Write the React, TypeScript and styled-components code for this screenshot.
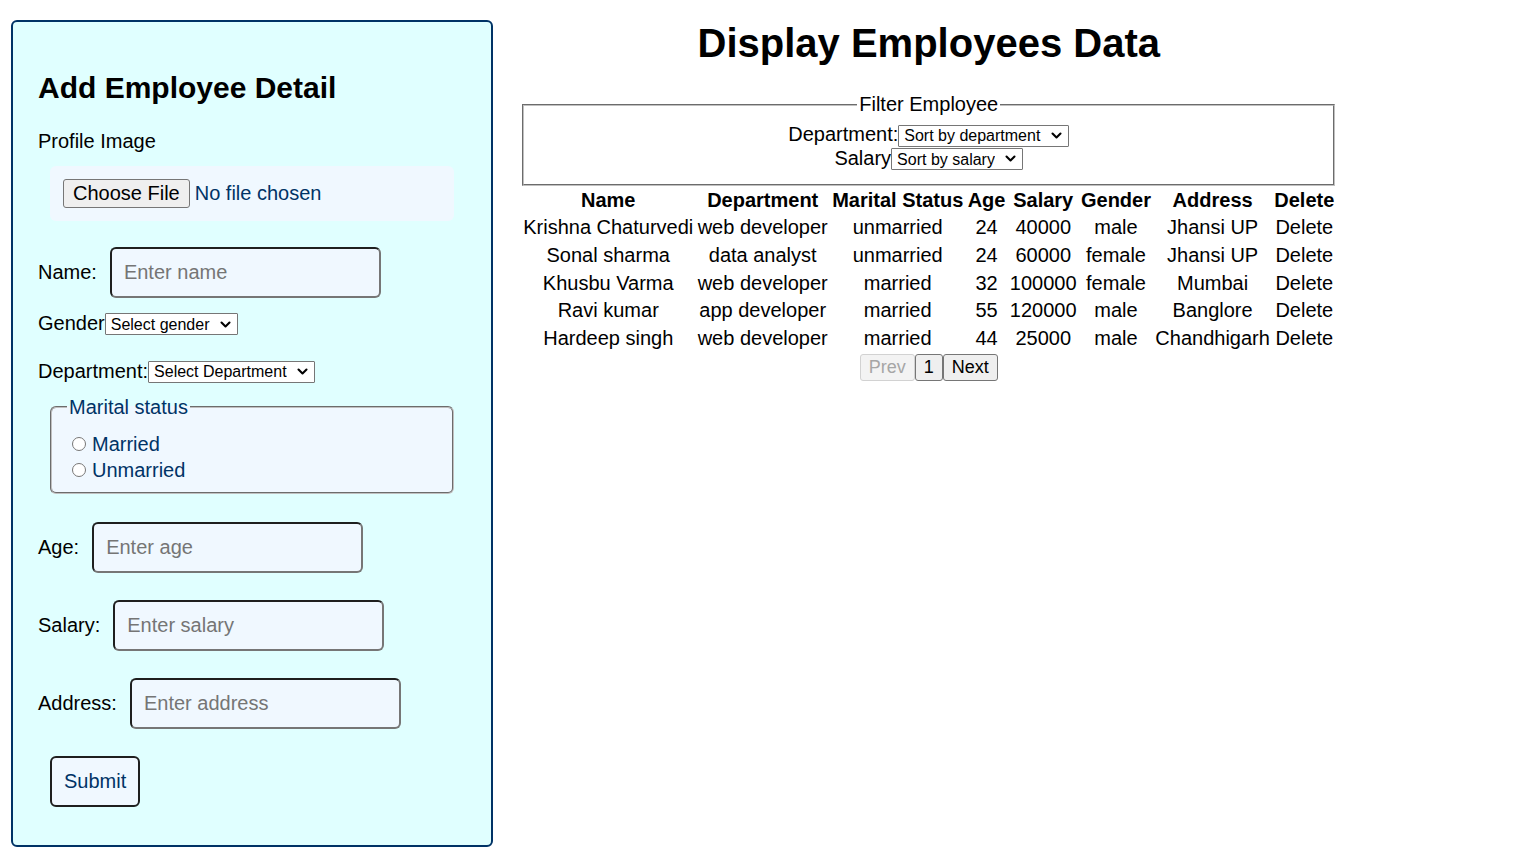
import React from "react";
import styled, { createGlobalStyle } from "styled-components";

const GlobalStyle = createGlobalStyle`
  body {
    margin: 0;
    background: #fff;
    color: #000;
    font-family: "Liberation Sans", Arial, sans-serif;
  }
`;

const Page = styled.div`
  display: flex;
  align-items: flex-start;
  padding: 8px;
`;

const FormPanel = styled.form`
  box-sizing: border-box;
  width: 482px;
  margin: 12px 0 0 3px;
  padding: 24px 25px;
  background: #e0ffff;
  border: 2px solid #003366;
  border-radius: 6px;
  font-size: 20px;
`;

const FormTitle = styled.h2`
  font-size: 30px;
  margin: 0.83em 0;
`;

const FieldName = styled.div`
  line-height: 23px;
`;

const FileBox = styled.div`
  display: flex;
  align-items: center;
  margin: 13px 12px 0;
  padding: 13px;
  background: #f0f8ff;
  border-radius: 6px;
  color: #003366;
`;

const GreyButton = styled.button<{ $big?: boolean }>`
  box-sizing: border-box;
  height: ${(p) => (p.$big ? 29 : 27)}px;
  padding: 0 ${(p) => (p.$big ? 9 : 8)}px;
  font-family: inherit;
  font-size: ${(p) => (p.$big ? 20 : 18)}px;
  color: #000;
  background: #efefef;
  border: 1px solid #767676;
  border-radius: 3px;
  vertical-align: top;
  cursor: pointer;

  &:disabled {
    color: #a6a6a6;
    background: #f3f3f3;
    border-color: #d2d2d2;
    cursor: default;
  }
`;

const FileButton = styled(GreyButton)`
  margin-right: 5px;
`;

const Row = styled.div<{ $top: number; $gap?: number }>`
  display: flex;
  align-items: center;
  gap: ${(p) => p.$gap ?? 0}px;
  margin-top: ${(p) => p.$top}px;
  line-height: 23px;
`;

const TextInput = styled.input`
  box-sizing: border-box;
  width: 271px;
  height: 51px;
  padding: 0 12px;
  font-family: inherit;
  font-size: 20px;
  color: #003366;
  background: #f0f8ff;
  border: 2px solid;
  border-color: #1f1f1f #767676 #767676 #1f1f1f;
  border-radius: 6px;
  outline: none;

  &::placeholder {
    color: #757575;
  }
`;

const SelectWrap = styled.span`
  position: relative;
  display: inline-block;
`;

const NativeSelect = styled.select`
  appearance: none;
  box-sizing: border-box;
  height: 22px;
  margin: 0;
  padding: 0 27px 0 5px;
  font-family: "Liberation Sans", Arial, sans-serif;
  font-size: 16px;
  color: #000;
  background: #fff;
  border: 1px solid #767676;
  border-radius: 1px;
`;

const Chevron = styled.svg`
  position: absolute;
  right: 7px;
  top: 50%;
  width: 11px;
  height: 7px;
  margin-top: -3px;
  pointer-events: none;
`;

type DropdownProps = { options: string[] };

const Dropdown: React.FC<DropdownProps> = ({ options }) => (
  <SelectWrap>
    <NativeSelect defaultValue="">
      <option value="">{options[0]}</option>
      {options.slice(1).map((o) => (
        <option key={o}>{o}</option>
      ))}
    </NativeSelect>
    <Chevron viewBox="0 0 11 7">
      <path d="M1.5 1.5 L5.5 5.5 L9.5 1.5" fill="none" stroke="#000" strokeWidth="2.1" strokeLinecap="round" strokeLinejoin="round" />
    </Chevron>
  </SelectWrap>
);

const MaritalSet = styled.fieldset`
  margin: 13px 12px 0;
  padding: 12px 15px 9px;
  background: #f0f8ff;
  border: 2px groove rgb(192, 192, 192);
  border-radius: 6px;
  color: #003366;

  legend {
    padding: 0 2px;
  }
`;

const RadioLine = styled.label`
  display: block;
  line-height: 26px;

  input {
    width: 14px;
    height: 14px;
    margin: 0 6px 0 5px;
  }
`;

const SubmitButton = styled.button`
  box-sizing: border-box;
  height: 51px;
  margin: 27px 12px 14px;
  padding: 0 12px;
  font-family: inherit;
  font-size: 20px;
  color: #003366;
  background: #f0f8ff;
  border: 2px solid #1f1f1f;
  border-radius: 6px;
  cursor: pointer;
`;

const Board = styled.section`
  margin-left: 27px;
`;

const BoardTitle = styled.h1`
  font-size: 40px;
  margin: 13px 0 27px;
  text-align: center;
`;

const FilterSet = styled.fieldset`
  margin: 0 2px;
  padding: 0.35em 0.75em 13.5px;
  font-size: 20px;
  text-align: center;
  border: 2px groove rgb(192, 192, 192);

  legend {
    margin: 0 auto;
    padding: 0 2px;
  }
`;

const Grid = styled.table`
  font-size: 20px;

  th,
  td {
    padding: 1.3px 1.2px;
    text-align: center;
  }
`;

const Pager = styled.div`
  display: flex;
  justify-content: center;
  margin-top: 1px;
`;

const employees = [
  { name: "Krishna Chaturvedi", dept: "web developer", status: "unmarried", age: 24, salary: 40000, gender: "male", address: "Jhansi UP" },
  { name: "Sonal sharma", dept: "data analyst", status: "unmarried", age: 24, salary: 60000, gender: "female", address: "Jhansi UP" },
  { name: "Khusbu Varma", dept: "web developer", status: "married", age: 32, salary: 100000, gender: "female", address: "Mumbai" },
  { name: "Ravi kumar", dept: "app developer", status: "married", age: 55, salary: 120000, gender: "male", address: "Banglore" },
  { name: "Hardeep singh", dept: "web developer", status: "married", age: 44, salary: 25000, gender: "male", address: "Chandhigarh" },
];

const departments = ["web developer", "app developer", "data analyst"];

const App: React.FC = () => {
  return (
    <Page>
      <GlobalStyle />
      <FormPanel onSubmit={(e) => e.preventDefault()}>
        <FormTitle>Add Employee Detail</FormTitle>
        <FieldName>Profile Image</FieldName>
        <FileBox>
          <FileButton type="button" $big>Choose File</FileButton>
          No file chosen
        </FileBox>

        <Row $top={26} $gap={13}>
          Name:
          <TextInput type="text" placeholder="Enter name" />
        </Row>
        <Row $top={14}>
          Gender
          <Dropdown options={["Select gender", "male", "female"]} />
        </Row>
        <Row $top={24}>
          Department:
          <Dropdown options={["Select Department", ...departments]} />
        </Row>

        <MaritalSet>
          <legend>Marital status</legend>
          <RadioLine>
            <input type="radio" name="marital" value="married" />Married
          </RadioLine>
          <RadioLine>
            <input type="radio" name="marital" value="unmarried" />Unmarried
          </RadioLine>
        </MaritalSet>

        <Row $top={28} $gap={13}>
          Age:
          <TextInput type="text" placeholder="Enter age" />
        </Row>
        <Row $top={27} $gap={13}>
          Salary:
          <TextInput type="text" placeholder="Enter salary" />
        </Row>
        <Row $top={27} $gap={13}>
          Address:
          <TextInput type="text" placeholder="Enter address" />
        </Row>
        <SubmitButton type="submit">Submit</SubmitButton>
      </FormPanel>

      <Board>
        <BoardTitle>Display Employees Data</BoardTitle>
        <FilterSet>
          <legend>Filter Employee</legend>
          <div>
            Department:
            <Dropdown options={["Sort by department", ...departments]} />
          </div>
          <div>
            Salary
            <Dropdown options={["Sort by salary", "low to high", "high to low"]} />
          </div>
        </FilterSet>
        <Grid>
          <thead>
            <tr>
              <th>Name</th>
              <th>Department</th>
              <th>Marital Status</th>
              <th>Age</th>
              <th>Salary</th>
              <th>Gender</th>
              <th>Address</th>
              <th>Delete</th>
            </tr>
          </thead>
          <tbody>
            {employees.map((v) => (
              <tr key={v.name}>
                <td>{v.name}</td>
                <td>{v.dept}</td>
                <td>{v.status}</td>
                <td>{v.age}</td>
                <td>{v.salary}</td>
                <td>{v.gender}</td>
                <td>{v.address}</td>
                <td>Delete</td>
              </tr>
            ))}
          </tbody>
        </Grid>
        <Pager>
          <GreyButton disabled>Prev</GreyButton>
          <GreyButton>1</GreyButton>
          <GreyButton>Next</GreyButton>
        </Pager>
      </Board>
    </Page>
  );
};

export default App;
